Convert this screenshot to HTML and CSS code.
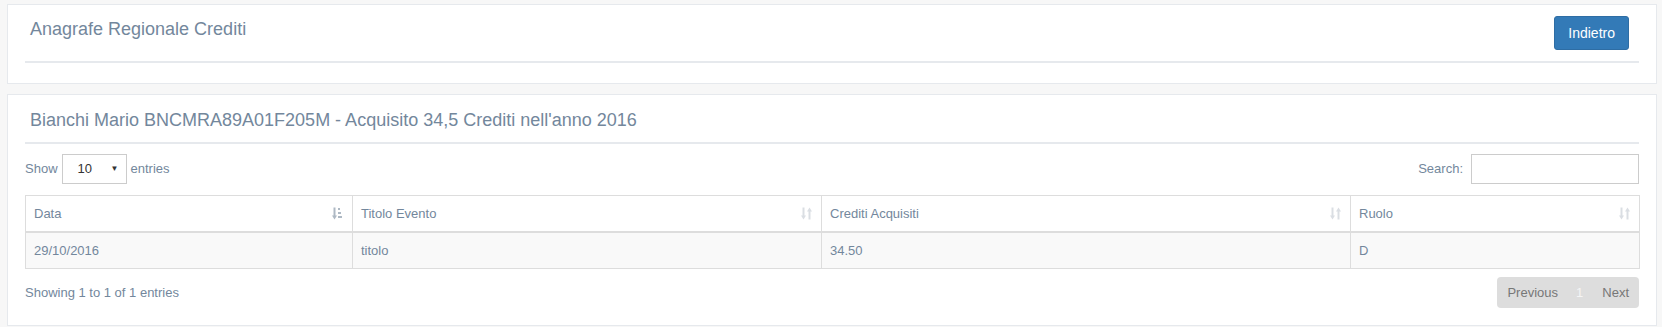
FILE: index.html
```html
<!DOCTYPE html>
<html lang="it">
<head>
    <meta charset="UTF-8">
    <meta name="viewport" content="width=device-width, initial-scale=1.0">
    <title>Anagrafe Regionale Crediti</title>
    <link rel="stylesheet" href="styles.css">
</head>
<body>
    <div class="main">
        <div class="panel">
            <div class="panel-title top-title">
                <h2>Anagrafe Regionale Crediti</h2>
                <button class="btn-primary">Indietro</button>
            </div>
        </div>

        <div class="panel">
            <div class="panel-title">
                <h2>Bianchi Mario BNCMRA89A01F205M - Acquisito 34,5 Crediti nell'anno 2016</h2>
            </div>
            <div class="content">
                <div class="controls">
                    <div class="length">
                        <span>Show</span>
                        <div class="select"><span>10</span><span class="caret">&#9660;</span></div>
                        <span>entries</span>
                    </div>
                    <div class="filter">
                        <label for="search">Search:</label>
                        <input id="search" type="search">
                    </div>
                </div>

                <table class="grid">
                    <colgroup>
                        <col style="width:327px">
                        <col style="width:469px">
                        <col style="width:529px">
                        <col style="width:289px">
                    </colgroup>
                    <thead>
                        <tr>
                            <th>Data
                                <svg class="sort sorted" width="11" height="13" viewBox="0 0 11 13">
                                    <path d="M2.5 0.5v9" stroke="currentColor" stroke-width="2"/>
                                    <path d="M0 8.5h5l-2.5 4z" fill="currentColor"/>
                                    <rect x="6" y="1" width="2" height="2" fill="currentColor"/>
                                    <rect x="6" y="5" width="3" height="2" fill="currentColor"/>
                                    <rect x="6" y="9" width="4" height="2" fill="currentColor"/>
                                </svg>
                            </th>
                            <th>Titolo Evento
                                <svg class="sort" width="11" height="13" viewBox="0 0 11 13">
                                    <path d="M2.5 0.5v9" stroke="currentColor" stroke-width="2"/>
                                    <path d="M0 8.5h5l-2.5 4z" fill="currentColor"/>
                                    <path d="M8.5 3.5v9" stroke="currentColor" stroke-width="2"/>
                                    <path d="M6 4.5h5l-2.5-4z" fill="currentColor"/>
                                </svg>
                            </th>
                            <th>Crediti Acquisiti
                                <svg class="sort" width="11" height="13" viewBox="0 0 11 13">
                                    <path d="M2.5 0.5v9" stroke="currentColor" stroke-width="2"/>
                                    <path d="M0 8.5h5l-2.5 4z" fill="currentColor"/>
                                    <path d="M8.5 3.5v9" stroke="currentColor" stroke-width="2"/>
                                    <path d="M6 4.5h5l-2.5-4z" fill="currentColor"/>
                                </svg>
                            </th>
                            <th>Ruolo
                                <svg class="sort" width="11" height="13" viewBox="0 0 11 13">
                                    <path d="M2.5 0.5v9" stroke="currentColor" stroke-width="2"/>
                                    <path d="M0 8.5h5l-2.5 4z" fill="currentColor"/>
                                    <path d="M8.5 3.5v9" stroke="currentColor" stroke-width="2"/>
                                    <path d="M6 4.5h5l-2.5-4z" fill="currentColor"/>
                                </svg>
                            </th>
                        </tr>
                    </thead>
                    <tbody>
                        <tr>
                            <td>29/10/2016</td>
                            <td>titolo</td>
                            <td>34.50</td>
                            <td>D</td>
                        </tr>
                    </tbody>
                </table>

                <div class="footer">
                    <div class="info">Showing 1 to 1 of 1 entries</div>
                    <div class="pager">
                        <span class="page">Previous</span>
                        <span class="page current">1</span>
                        <span class="page">Next</span>
                    </div>
                </div>
            </div>
        </div>
    </div>
</body>
</html>
```

FILE: styles.css
```css
*{
    box-sizing: border-box;
}
body{
    margin: 0;
    background: #f7f7f7;
    font-family: "Liberation Sans", Arial, sans-serif;
    font-size: 13px;
    line-height: 1.471;
    color: #73879c;
}
.main{
    padding: 4px 5px 0 7px;
}
.panel{
    background: #fff;
    border: 1px solid #e6e9ed;
    padding: 10px 17px;
    margin-bottom: 10px;
}
.panel-title{
    display: flex;
    justify-content: space-between;
    align-items: flex-start;
    padding: 1px 5px 6px;
    border-bottom: 2px solid #e6e9ed;
    margin-bottom: 10px;
}
.panel-title h2{
    margin: 3px 0 5px;
    font-size: 18px;
    font-weight: 400;
    line-height: 22px;
    color: #73879c;
}
.top-title h2{
    margin-top: 2px;
}
.btn-primary{
    font-family: inherit;
    font-size: 14px;
    line-height: 20px;
    padding: 6px 13px;
    margin: 0 5px 5px 0;
    color: #fff;
    background: #337ab7;
    border: 1px solid #2e6da4;
    border-radius: 3px;
}
.controls{
    display: flex;
    justify-content: space-between;
    align-items: center;
    height: 30px;
}
.length, .filter{
    display: flex;
    align-items: center;
    gap: 4px;
}
.filter{
    gap: 8px;
}
.select{
    width: 65px;
    height: 30px;
    border: 1px solid #ccc;
    display: flex;
    align-items: center;
    justify-content: space-between;
    padding: 0 7px 0 15px;
    color: #333;
}
.caret{
    font-size: 8px;
}
.filter input{
    width: 168px;
    height: 30px;
    border: 1px solid #ccc;
    outline: none;
}
.grid{
    width: 100%;
    table-layout: fixed;
    border-collapse: collapse;
    margin-top: 11px;
    border: 1px solid #ddd;
}
.grid th, .grid td{
    border: 1px solid #ddd;
    padding: 8px;
    text-align: left;
    font-weight: 400;
    line-height: 19px;
}
.grid th{
    position: relative;
    border-bottom-width: 2px;
}
.grid td{
    background: #f9f9f9;
}
.sort{
    position: absolute;
    right: 9px;
    top: 11px;
    color: #dadee3;
}
.sort.sorted{
    color: #aeb9c4;
}
.footer{
    display: flex;
    justify-content: space-between;
    align-items: center;
    margin-top: 8px;
    margin-bottom: 7px;
}
.pager{
    display: flex;
    background: #ddd;
    border-radius: 4px;
}
.page{
    padding: 6px 10px;
    line-height: 19px;
    color: #777;
}
.page:first-child{
    padding-right: 9px;
}
.page.current{
    color: #f5f5f5;
    padding: 6px 9px;
}
```
